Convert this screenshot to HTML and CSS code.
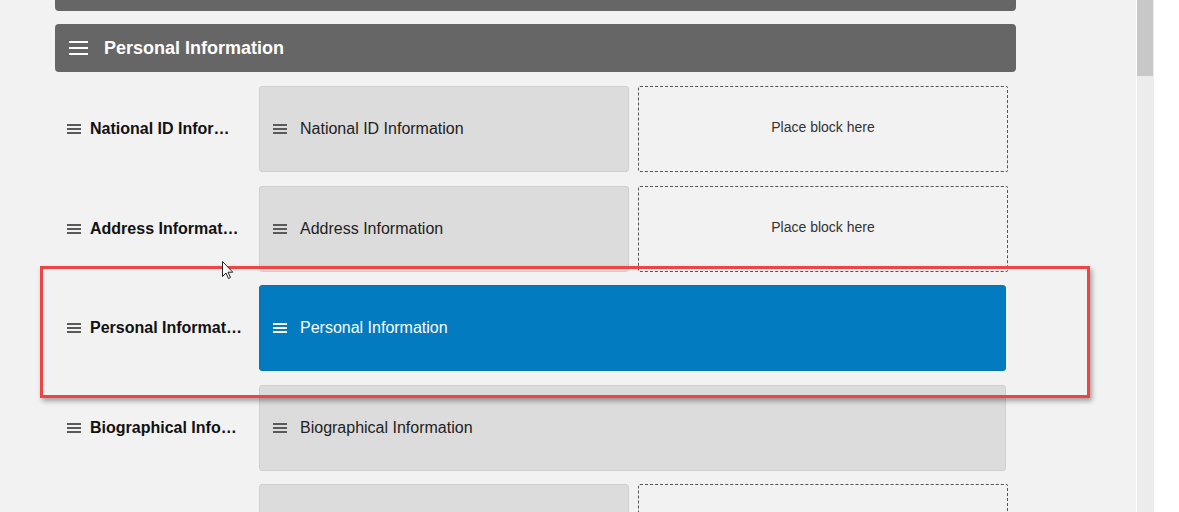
FILE: index.html
```html
<!DOCTYPE html>
<html lang="en">
<head>
    <meta charset="UTF-8">
    <meta name="viewport" content="width=device-width, initial-scale=1.0">
    <title>Layout Editor</title>
    <link rel="stylesheet" href="styles.css">
</head>
<body>

<div class="page">
    <div class="main">
        <div class="section-bar section-top"></div>

        <div class="section-bar section-header">
            <svg class="icon-menu-lg" viewBox="0 0 19 14"><rect x="0" y="0" width="19" height="2"/><rect x="0" y="6" width="19" height="2"/><rect x="0" y="12" width="19" height="2"/></svg>
            <span>Personal Information</span>
        </div>

        <div class="rows">
            <!-- row 1 -->
            <div class="row-label">
                <svg class="icon-menu" viewBox="0 0 14 10"><rect y="0" width="14" height="2"/><rect y="4" width="14" height="2"/><rect y="8" width="14" height="2"/></svg>
                <span class="label-text">National ID Information</span>
            </div>
            <div class="block">
                <svg class="icon-menu" viewBox="0 0 14 10"><rect y="0" width="14" height="2"/><rect y="4" width="14" height="2"/><rect y="8" width="14" height="2"/></svg>
                <span>National ID Information</span>
            </div>
            <div class="drop-zone">Place block here</div>

            <!-- row 2 -->
            <div class="row-label">
                <svg class="icon-menu" viewBox="0 0 14 10"><rect y="0" width="14" height="2"/><rect y="4" width="14" height="2"/><rect y="8" width="14" height="2"/></svg>
                <span class="label-text">Address Information</span>
            </div>
            <div class="block">
                <svg class="icon-menu" viewBox="0 0 14 10"><rect y="0" width="14" height="2"/><rect y="4" width="14" height="2"/><rect y="8" width="14" height="2"/></svg>
                <span>Address Information</span>
            </div>
            <div class="drop-zone">Place block here</div>

            <!-- row 3 (selected) -->
            <div class="row-label">
                <svg class="icon-menu" viewBox="0 0 14 10"><rect y="0" width="14" height="2"/><rect y="4" width="14" height="2"/><rect y="8" width="14" height="2"/></svg>
                <span class="label-text">Personal Information</span>
            </div>
            <div class="block block-wide block-active">
                <svg class="icon-menu" viewBox="0 0 14 10"><rect y="0" width="14" height="2"/><rect y="4" width="14" height="2"/><rect y="8" width="14" height="2"/></svg>
                <span>Personal Information</span>
            </div>

            <!-- row 4 -->
            <div class="row-label">
                <svg class="icon-menu" viewBox="0 0 14 10"><rect y="0" width="14" height="2"/><rect y="4" width="14" height="2"/><rect y="8" width="14" height="2"/></svg>
                <span class="label-text">Biographical Information</span>
            </div>
            <div class="block block-wide">
                <svg class="icon-menu" viewBox="0 0 14 10"><rect y="0" width="14" height="2"/><rect y="4" width="14" height="2"/><rect y="8" width="14" height="2"/></svg>
                <span>Biographical Information</span>
            </div>

            <!-- row 5 -->
            <div class="row-label"></div>
            <div class="block"></div>
            <div class="drop-zone"></div>
        </div>
    </div>

    <div class="scrollbar"><div class="scroll-thumb"></div></div>

    <div class="highlight"></div>
    <svg class="cursor" viewBox="0 0 12 19"><path d="M0.5 0.5 L0.5 15.5 L4 12 L6.5 17.5 L8.5 16.5 L6 11.2 L10.8 11.2 Z"/></svg>
</div>

</body>
</html>
```

FILE: styles.css
```css
body {
    margin: 0;
    font-family: "Liberation Sans", Arial, sans-serif;
    background-color: #fff;
    overflow: hidden;
}
.page {
    position: relative;
    display: grid;
    grid-template-columns: 1136px 1px 17px 1fr;
    height: 512px;
    overflow: hidden;
}
.main {
    grid-column: 1;
    background-color: #f2f2f2;
    padding-left: 55px;
}
.scrollbar {
    grid-column: 3;
    background-color: #ececec;
}
.scroll-thumb {
    height: 76px;
    margin-right: 1px;
    background-color: #c8c8c8;
}
.section-bar {
    width: 961px;
    background-color: #666;
    color: white;
}
.section-top {
    height: 11px;
    border-radius: 0 0 4px 4px;
}
.section-header {
    margin-top: 13px;
    height: 48px;
    border-radius: 4px;
    display: flex;
    align-items: center;
    padding-left: 14px;
    box-sizing: border-box;
    font-size: 18px;
    font-weight: bold;
}
.icon-menu-lg {
    width: 19px;
    height: 14px;
    fill: white;
    margin-right: 16px;
}
.rows {
    margin-top: 14px;
    display: grid;
    grid-template-columns: 195px 370px 370px;
    grid-auto-rows: 86px;
    column-gap: 9px;
    row-gap: 13.5px;
}
.row-label {
    grid-column: 1;
    display: flex;
    align-items: center;
    padding-left: 12px;
    gap: 9px;
    color: #111;
}
.label-text {
    width: 152.5px;
    flex-shrink: 0;
    font-size: 16px;
    font-weight: bold;
    white-space: nowrap;
    overflow: hidden;
    text-overflow: ellipsis;
}
.icon-menu {
    width: 14px;
    height: 10px;
    flex-shrink: 0;
    fill: #5a5a5a;
}
.block {
    display: flex;
    align-items: center;
    gap: 13px;
    padding-left: 13px;
    background-color: #dcdcdc;
    border: 1px solid #cfcfcf;
    border-radius: 3px;
    font-size: 16px;
    color: #222;
}
.block-wide {
    grid-column: 2 / span 2;
    margin-right: 2px;
}
.block-active {
    background-color: #027bc0;
    border-color: #0a72ad;
    color: white;
}
.block-active .icon-menu {
    fill: white;
}
.drop-zone {
    display: flex;
    align-items: center;
    justify-content: center;
    padding-bottom: 4px;
    box-sizing: border-box;
    border: 1px dashed #555;
    border-radius: 2px;
    font-size: 14px;
    color: #333;
}
.highlight {
    position: absolute;
    left: 40px;
    top: 266px;
    width: 1050px;
    height: 132px;
    box-sizing: border-box;
    border: 3px solid #ef4444;
    box-shadow: 2px 3px 5px rgba(0, 0, 0, 0.35);
}
.cursor {
    position: absolute;
    left: 222px;
    top: 261px;
    width: 12px;
    height: 19px;
    fill: white;
    stroke: #222;
    stroke-width: 1;
}
```
